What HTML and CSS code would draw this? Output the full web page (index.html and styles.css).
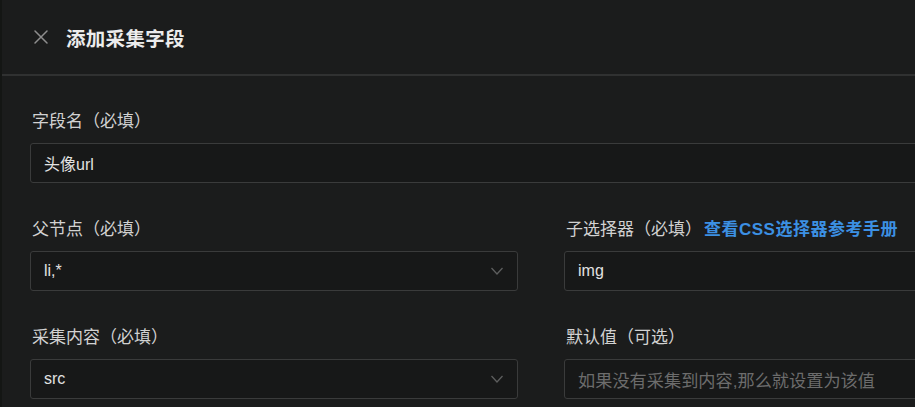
FILE: index.html
```html
<!DOCTYPE html>
<html lang="zh-CN">
<head>
    <meta charset="UTF-8">
    <meta name="viewport" content="width=device-width, initial-scale=1.0">
    <title>添加采集字段</title>
    <link rel="stylesheet" href="styles.css">
</head>
<body>
    <div class="drawer">
        <header class="drawer-header">
            <span class="close">
                <svg width="16" height="16" viewBox="0 0 16 16">
                    <path d="M2 2 L14 14 M14 2 L2 14" stroke="currentColor" stroke-width="1.5" fill="none" stroke-linecap="round"/>
                </svg>
            </span>
            <h1>添加采集字段</h1>
        </header>
        <main class="drawer-body">
            <div class="form-grid">
                <div class="field full">
                    <label>字段名（必填）</label>
                    <div class="input"><span class="value">头像url</span></div>
                </div>
                <div class="field">
                    <label>父节点（必填）</label>
                    <div class="input select">
                        <span class="value">li,*</span>
                        <svg class="arrow" width="14" height="10" viewBox="0 0 14 10">
                            <path d="M1.5 2 L7 8 L12.5 2" stroke="currentColor" stroke-width="1.3" fill="none"/>
                        </svg>
                    </div>
                </div>
                <div class="field">
                    <label>子选择器（必填）<a class="link" href="#">查看CSS选择器参考手册</a></label>
                    <div class="input"><span class="value">img</span></div>
                </div>
                <div class="field">
                    <label>采集内容（必填）</label>
                    <div class="input select">
                        <span class="value">src</span>
                        <svg class="arrow" width="14" height="10" viewBox="0 0 14 10">
                            <path d="M1.5 2 L7 8 L12.5 2" stroke="currentColor" stroke-width="1.3" fill="none"/>
                        </svg>
                    </div>
                </div>
                <div class="field">
                    <label>默认值（可选）</label>
                    <div class="input"><span class="placeholder">如果没有采集到内容,那么就设置为该值</span></div>
                </div>
            </div>
        </main>
    </div>
</body>
</html>
```

FILE: styles.css
```css
html, body {
    margin: 0;
    padding: 0;
    height: 100%;
    overflow: hidden;
    background-color: #1b1c1c;
}
body {
    font-family: "Liberation Sans", "Noto Sans CJK SC", sans-serif;
    color: #d6d6d6;
    text-spacing-trim: space-all;
}
.drawer {
    width: 1100px;
    height: 100%;
    border-left: 2px solid #141614;
    box-sizing: border-box;
}
.drawer-header {
    display: flex;
    align-items: center;
    height: 74px;
    padding-left: 31px;
    border-bottom: 2px solid #303131;
}
.close {
    display: flex;
    color: #8e8e8e;
    margin-right: 17px;
}
.drawer-header h1 {
    margin: 0;
    font-size: 19.5px;
    font-weight: 600;
    color: #ececec;
    letter-spacing: 0.3px;
}
.drawer-body {
    padding: 35px 0 0 28px;
}
.form-grid {
    display: grid;
    grid-template-columns: 488px 488px;
    column-gap: 46px;
    row-gap: 36px;
}
.field.full {
    grid-column: 1 / 3;
}
.field label {
    display: block;
    height: 22px;
    line-height: 22px;
    font-size: 17px;
    color: #d2d2d2;
    margin: 0 0 10px 2px;
    white-space: nowrap;
}
.link {
    color: #3c90e3;
    text-decoration: none;
    font-weight: 600;
    letter-spacing: 0.5px;
    margin-left: 2px;
}
.input {
    display: flex;
    align-items: center;
    justify-content: space-between;
    height: 40px;
    box-sizing: border-box;
    padding: 0 13px;
    background-color: #171818;
    border: 1px solid #3a3b3b;
    border-radius: 3px;
    font-size: 16px;
}
.value {
    color: #e2e2e2;
}
.placeholder {
    color: #6c6c6c;
    font-size: 17.2px;
}
.arrow {
    color: #5d5e5e;
}
```
